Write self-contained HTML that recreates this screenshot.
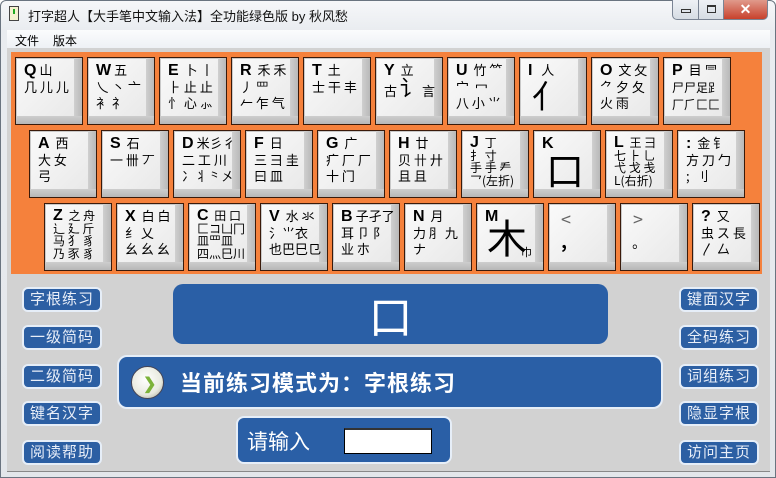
<!DOCTYPE html>
<html><head><meta charset="utf-8">
<style>
*{margin:0;padding:0;box-sizing:border-box}
body{width:776px;height:478px;overflow:hidden;background:#fff;font-family:"Liberation Sans","Noto Sans CJK SC",sans-serif;position:relative}
.win{position:absolute;left:0;top:0;width:776px;height:478px;border:1px solid #6a7480;border-radius:6px 6px 0 0;background:linear-gradient(#f6f7f9,#e9ecf0 30px,#e3e6ea);}
.title{position:absolute;left:28px;top:6px;font-size:13px;color:#111}
.ico{position:absolute;left:9px;top:6px;width:10px;height:15px;border:1px solid #444;background:#f5f2d0}
.ico:after{content:"";position:absolute;left:3px;top:2px;width:2px;height:5px;background:#2a2}
.ctl{position:absolute;top:0;height:20px;border:1px solid #7a8494;border-top:none}
.menu{position:absolute;left:7px;top:30px;width:763px;height:18px;background:linear-gradient(#fbfcfd,#eef1f5);font-size:12px;color:#000}
.menu span{position:absolute;top:2px}
.client{position:absolute;left:7px;top:48px;width:763px;height:424px;background:#d2d2d2;border-bottom:1px solid #888}
.kb{position:absolute;left:11px;top:52px;width:751px;height:222px;background:#f5813c}
.k{position:absolute;width:68px;height:68px;border:1px solid #3a1a0a;background:#c9c9c9;}
.k .f{position:absolute;left:1px;top:1px;right:8px;bottom:8px;background:linear-gradient(135deg,#fafafa,#e9e9e9);}
.k .r{position:absolute;right:0;top:0;bottom:0;width:8px;background:linear-gradient(90deg,#cfcfcf,#b9b9b9)}
.k .b{position:absolute;left:0;right:0;bottom:0;height:8px;background:linear-gradient(#cdcdcd,#b7b7b7)}
.k .t{position:absolute;left:8px;top:4px;font-size:13px;line-height:16px;color:#000;white-space:nowrap;font-family:"Noto Sans CJK SC",sans-serif}
.k .t.s{font-size:12px;line-height:12.5px;top:6px}
.k .t b{font-family:"Liberation Sans",sans-serif;font-size:16px;font-weight:bold;margin-right:3px}
.btn{position:absolute;width:80px;height:25px;background:#2c5fa3;border:2px solid #e6eef8;border-radius:6px;color:#e8eef8;font-size:15px;text-align:center;line-height:21px;letter-spacing:1px}
.blue{position:absolute;background:#2a5fa6}
</style></head><body>
<div class="win"></div>
<div class="ico"></div>
<div class="title">打字超人【大手笔中文输入法】全功能绿色版 by 秋风愁</div>
<div class="ctl" style="left:672px;width:27px;border-radius:0 0 0 5px;background:linear-gradient(#eef1f5,#d6dce4)"><div style="position:absolute;left:8px;top:9px;width:10px;height:4px;border:1px solid #333"></div></div>
<div class="ctl" style="left:698px;width:26px;background:linear-gradient(#eef1f5,#d6dce4)"><div style="position:absolute;left:8px;top:5px;width:9px;height:8px;border:1px solid #333;border-top-width:2px"></div></div>
<div class="ctl" style="left:723px;width:45px;border-radius:0 0 5px 0;background:linear-gradient(#e09a8c,#c8412c);color:#fff;font-weight:bold;font-size:14px;text-align:center;line-height:18px">✕</div>
<div class="menu"><span style="left:8px">文件</span><span style="left:46px">版本</span></div>
<div class="client"></div>
<div class="kb"></div>

<div class="k" style="left:15px;top:57px"><div class="f"></div><div class="r"></div><div class="b"></div><div class="t"><b>Q</b>山<br>几 儿 儿</div></div>
<div class="k" style="left:87px;top:57px"><div class="f"></div><div class="r"></div><div class="b"></div><div class="t"><b>W</b>五<br>乀 丶 亠<br>衤 礻</div></div>
<div class="k" style="left:159px;top:57px"><div class="f"></div><div class="r"></div><div class="b"></div><div class="t"><b>E</b> 卜 丨<br>⺊ 止 止<br>忄 心 ⺗</div></div>
<div class="k" style="left:231px;top:57px"><div class="f"></div><div class="r"></div><div class="b"></div><div class="t"><b>R</b> 禾 禾<br>丿 罒<br>𠂉 乍 气</div></div>
<div class="k" style="left:303px;top:57px"><div class="f"></div><div class="r"></div><div class="b"></div><div class="t"><b>T</b> 土<br>士 干 丰</div></div>
<div class="k" style="left:375px;top:57px"><div class="f"></div><div class="r"></div><div class="b"></div><div class="t"><b>Y</b> 立<br>古 <span style="font-size:22px">讠</span>言</div></div>
<div class="k" style="left:447px;top:57px"><div class="f"></div><div class="r"></div><div class="b"></div><div class="t"><b>U</b> 竹 ⺮<br>宀 &nbsp;冖<br>八 小 ⺌</div></div>
<div class="k" style="left:519px;top:57px"><div class="f"></div><div class="r"></div><div class="b"></div><div class="t"><b>I</b> &nbsp;人<br><span style="font-size:32px;line-height:32px;margin-left:4px">亻</span></div></div>
<div class="k" style="left:591px;top:57px"><div class="f"></div><div class="r"></div><div class="b"></div><div class="t"><b>O</b> 文 攵<br>⺈ 夕 夂<br>火 雨</div></div>
<div class="k" style="left:663px;top:57px"><div class="f"></div><div class="r"></div><div class="b"></div><div class="t"><b>P</b> 目 ⺜<br><span style="font-size:12px">尸尸足⻊<br>厂⺁匚⼕</span></div></div>

<div class="k" style="left:29px;top:130px"><div class="f"></div><div class="r"></div><div class="b"></div><div class="t"><b>A</b> 西<br>大 女<br>弓</div></div>
<div class="k" style="left:101px;top:130px"><div class="f"></div><div class="r"></div><div class="b"></div><div class="t"><b>S</b> 石<br>一 卌 丆</div></div>
<div class="k" style="left:173px;top:130px"><div class="f"></div><div class="r"></div><div class="b"></div><div class="t"><b>D</b>米彡彳<br>二 工 川<br>冫丬⺀㐅</div></div>
<div class="k" style="left:245px;top:130px"><div class="f"></div><div class="r"></div><div class="b"></div><div class="t"><b>F</b> 日<br>三 彐 圭<br>曰 皿</div></div>
<div class="k" style="left:317px;top:130px"><div class="f"></div><div class="r"></div><div class="b"></div><div class="t"><b>G</b> 广<br>疒 厂 厂<br>十 门</div></div>
<div class="k" style="left:389px;top:130px"><div class="f"></div><div class="r"></div><div class="b"></div><div class="t"><b>H</b> 廿<br>贝 卄 廾<br>且 且</div></div>
<div class="k" style="left:461px;top:130px"><div class="f"></div><div class="r"></div><div class="b"></div><div class="t s"><b>J</b> 丁<br>扌 寸<br>手 手 龵<br>乛(左折)</div></div>
<div class="k" style="left:533px;top:130px"><div class="f"></div><div class="r"></div><div class="b"></div><div class="t"><b>K</b><br><span style="font-size:38px;line-height:34px;margin-left:4px">口</span></div></div>
<div class="k" style="left:605px;top:130px"><div class="f"></div><div class="r"></div><div class="b"></div><div class="t s"><b>L</b> 王 ⺕<br>七 ⺊ ⺃<br>弋 戈 戋<br>L(右折)</div></div>
<div class="k" style="left:677px;top:130px"><div class="f"></div><div class="r"></div><div class="b"></div><div class="t"><b>:</b> 金 钅<br>方 刀 勹<br>; &nbsp;刂</div></div>

<div class="k" style="left:44px;top:203px"><div class="f"></div><div class="r"></div><div class="b"></div><div class="t s"><b>Z</b> 之 舟<br>辶 廴 斤<br>马 犭 豸<br>乃 豕 豸</div></div>
<div class="k" style="left:116px;top:203px"><div class="f"></div><div class="r"></div><div class="b"></div><div class="t"><b>X</b> 白 白<br>纟 乂<br>幺 幺 幺</div></div>
<div class="k" style="left:188px;top:203px"><div class="f"></div><div class="r"></div><div class="b"></div><div class="t s"><b>C</b> 田 口<br>匚コ凵冂<br>皿罒皿<br>四灬巳川</div></div>
<div class="k" style="left:260px;top:203px"><div class="f"></div><div class="r"></div><div class="b"></div><div class="t"><b>V</b> 水 氺<br>氵⺌衣<br>也巴巳㔾</div></div>
<div class="k" style="left:332px;top:203px"><div class="f"></div><div class="r"></div><div class="b"></div><div class="t"><b>B</b>子孑了<br>耳 卩 阝<br>业 朩</div></div>
<div class="k" style="left:404px;top:203px"><div class="f"></div><div class="r"></div><div class="b"></div><div class="t"><b>N</b> 月<br>力 ⺼ 九<br>ナ</div></div>
<div class="k" style="left:476px;top:203px"><div class="f"></div><div class="r"></div><div class="b"></div><div class="t"><b>M</b></div><div style="position:absolute;left:10px;top:12px;font-size:40px;line-height:40px;font-family:'Noto Sans CJK SC',sans-serif">木</div><div style="position:absolute;left:44px;top:40px;font-size:11px;font-family:'Noto Sans CJK SC',sans-serif">巾</div></div>
<div class="k" style="left:548px;top:203px"><div class="f"></div><div class="r"></div><div class="b"></div><div class="t" style="font-size:18px;line-height:22px;color:#666">&nbsp;&lt;<br><span style="color:#000;font-weight:bold">&nbsp;,</span></div></div>
<div class="k" style="left:620px;top:203px"><div class="f"></div><div class="r"></div><div class="b"></div><div class="t" style="font-size:18px;line-height:22px;color:#666">&nbsp;&gt;<br><span style="color:#000;font-size:14px">&nbsp;。</span></div></div>
<div class="k" style="left:692px;top:203px"><div class="f"></div><div class="r"></div><div class="b"></div><div class="t"><b>?</b> 又<br>虫 ス 長<br>〳 厶</div></div>

<div class="btn" style="left:22px;top:287px">字根练习</div>
<div class="btn" style="left:22px;top:325px">一级简码</div>
<div class="btn" style="left:22px;top:364px">二级简码</div>
<div class="btn" style="left:22px;top:401px">键名汉字</div>
<div class="btn" style="left:22px;top:440px">阅读帮助</div>
<div class="btn" style="left:679px;top:287px">键面汉字</div>
<div class="btn" style="left:679px;top:325px">全码练习</div>
<div class="btn" style="left:679px;top:364px">词组练习</div>
<div class="btn" style="left:679px;top:401px">隐显字根</div>
<div class="btn" style="left:679px;top:440px">访问主页</div>

<div class="blue" style="left:173px;top:284px;width:435px;height:60px;border-radius:10px;color:#fff;text-align:center;font-size:44px;line-height:60px;font-family:'Noto Sans CJK SC',sans-serif">口</div>
<div class="blue" style="left:117px;top:355px;width:546px;height:54px;border-radius:10px;border:2px solid #e6eef8"></div>
<div style="position:absolute;left:131px;top:366px;width:33px;height:33px;border-radius:50%;background:radial-gradient(circle at 45% 40%,#ffffff,#e8eadf 60%,#9a9a8a);border:1px solid #445"></div>
<div style="position:absolute;left:143px;top:374px;font-size:16px;font-weight:bold;color:#7cb33a">❯</div>
<div style="position:absolute;left:180px;top:366px;font-size:22px;font-weight:bold;color:#fff;letter-spacing:1px;font-family:'Noto Sans CJK SC',sans-serif">当前练习模式为：字根练习</div>
<div class="blue" style="left:236px;top:416px;width:216px;height:48px;border-radius:8px;border:2px solid #e6eef8"></div>
<div style="position:absolute;left:247px;top:426px;font-size:21px;color:#fff;font-family:'Noto Sans CJK SC',sans-serif">请输入</div>
<div style="position:absolute;left:344px;top:428px;width:88px;height:26px;background:#fff;border:1px solid #000;border-top:2px solid #333"></div>
</body></html>
